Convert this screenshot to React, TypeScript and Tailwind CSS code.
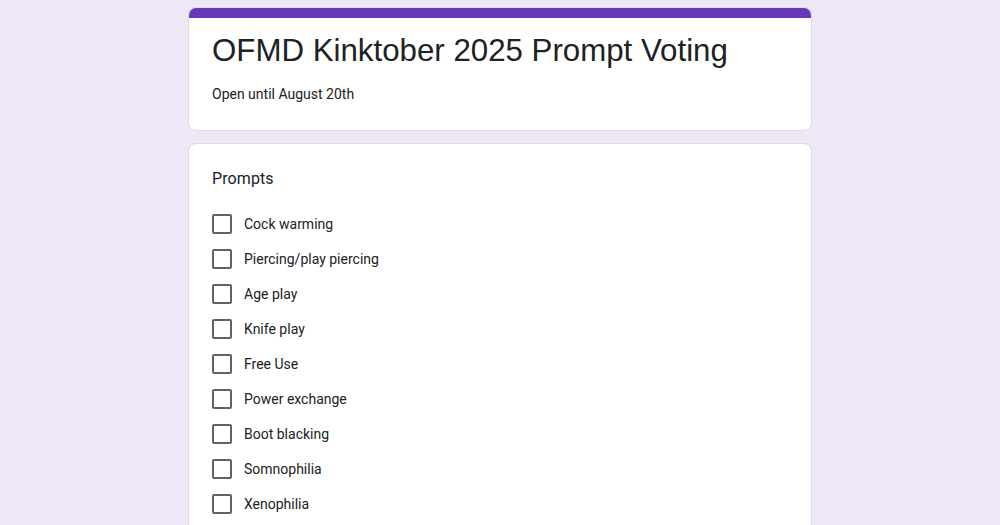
import React from 'react';

const PROMPTS = [
  'Cock warming',
  'Piercing/play piercing',
  'Age play',
  'Knife play',
  'Free Use',
  'Power exchange',
  'Boot blacking',
  'Somnophilia',
  'Xenophilia',
];

const App: React.FC = () => {
  return (
    <div className="h-[525px] w-full overflow-hidden bg-[#ede7f6] font-['Roboto',sans-serif]">
      <div className="mx-auto flex w-[624px] flex-col gap-[12px] pt-[7px]">
        {/* Header card */}
        <div className="overflow-hidden rounded-lg border border-[#dadce0] bg-white">
          <div className="h-[10px] bg-[#673ab7]" />
          <div className="px-[23px] pt-[13px] pb-[26px]">
            <h1 className="font-['Liberation_Sans',Arial,sans-serif] text-[31.25px] leading-[40px] text-[#202124]">
              OFMD Kinktober 2025 Prompt Voting
            </h1>
            <p className="mt-[13px] text-[14px] leading-5 text-[#202124]">Open until August 20th</p>
          </div>
        </div>

        {/* Question card */}
        <div className="rounded-lg border border-[#dadce0] bg-white px-[23px] pt-[23px] pb-6">
          <div className="text-[16px] leading-6 tracking-[0.1px] text-[#202124]">Prompts</div>
          <div className="mt-[15px] flex flex-col">
            {PROMPTS.map((p) => (
              <label key={p} className="flex h-[35px] items-center">
                <span className="h-5 w-5 shrink-0 rounded-[2px] border-2 border-[#5f6368]" />
                <span className="ml-3 text-[14px] leading-5 text-[#202124]">{p}</span>
              </label>
            ))}
          </div>
        </div>
      </div>
    </div>
  );
};

export default App;
